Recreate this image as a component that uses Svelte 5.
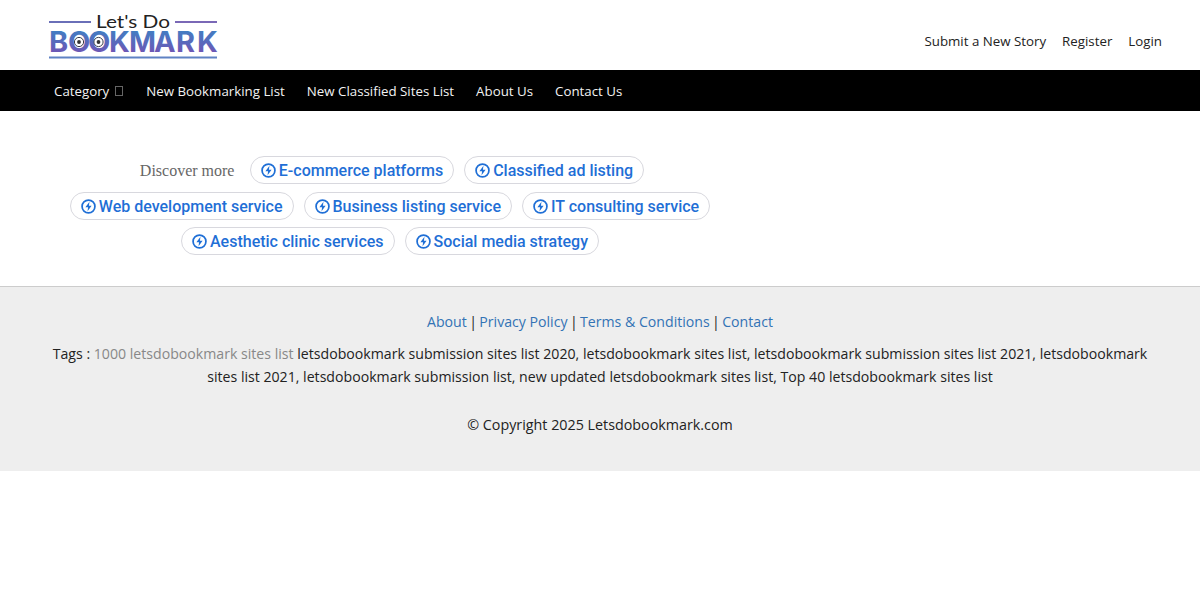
<script>
  const nav = ['New Bookmarking List', 'New Classified Sites List', 'About Us', 'Contact Us'];
  const rows = [
    ['E-commerce platforms', 'Classified ad listing'],
    ['Web development service', 'Business listing service', 'IT consulting service'],
    ['Aesthetic clinic services', 'Social media strategy']
  ];
</script>

<header class="top">
  <svg class="logo" width="170" height="48" viewBox="0 0 170 48" aria-label="Let's Do Bookmark">
    <defs>
      <linearGradient id="g" x1="0" y1="0" x2="0" y2="1">
        <stop offset="0.15" stop-color="#3f80c4" />
        <stop offset="0.85" stop-color="#7055b4" />
      </linearGradient>
    </defs>
    <rect x="0" y="8" width="42" height="2" fill="#6a6fb8" />
    <rect x="126" y="8" width="42" height="2" fill="#7a68b6" />
    <text x="47" y="15" class="lets" textLength="74" lengthAdjust="spacingAndGlyphs">Let's Do</text>
    <text y="39" x="0 19 39 60 80 105 127 148" class="bm" fill="url(#g)">BOOKMARK</text>
    <g fill="#fff" stroke="#3a3a4a" stroke-width="1">
      <circle cx="30" cy="29" r="4.6" />
      <circle cx="49.5" cy="29" r="4.6" />
    </g>
    <circle cx="30" cy="29" r="1.9" fill="#333" />
    <circle cx="49.5" cy="29" r="1.9" fill="#333" />
    <rect x="0" y="43.5" width="168" height="2" fill="#5f82c4" />
  </svg>
  <nav class="toplinks">
    <a href="#s">Submit a New Story</a>
    <a href="#r">Register</a>
    <a href="#l">Login</a>
  </nav>
</header>

<nav class="bar">
  <a class="cat" href="#c">Category <span class="box"></span></a>
  {#each nav as n}<a href="#n">{n}</a>{/each}
</nav>

<main class="main">
  <div class="discover">
    {#each rows as row, i}
      <div class="row">
        {#if i === 0}<span class="label">Discover more</span>{/if}
        {#each row as c}
          <a class="chip" href="#x">
            <svg class="ic" width="15" height="15" viewBox="0 0 14 14" fill="none">
              <circle cx="7" cy="7" r="6" stroke="#1f6fd6" stroke-width="1.6" />
              <path d="M7.9 2.6 4.1 7.8h2.5l-.5 3.6 3.8-5.2H7.4z" fill="#1f6fd6" />
            </svg>
            {c}
          </a>
        {/each}
      </div>
    {/each}
  </div>
</main>

<footer class="foot">
  <p class="links">
    <a href="#a">About</a> | <a href="#p">Privacy Policy</a> | <a href="#t">Terms &amp; Conditions</a> | <a href="#c">Contact</a>
  </p>
  <p class="tags">
    Tags : <a href="#k">1000 letsdobookmark sites list</a> letsdobookmark submission sites list 2020, letsdobookmark sites list, letsdobookmark submission sites list 2021, letsdobookmark sites list 2021, letsdobookmark submission list, new updated letsdobookmark sites list, Top 40 letsdobookmark sites list
  </p>
  <p class="copy">© Copyright 2025 Letsdobookmark.com</p>
</footer>

<style>
  :global(body) {
    margin: 0;
    background: #fff;
    font-family: "Open Sans", "Noto Sans", sans-serif;
    color: #222;
  }
  a { text-decoration: none; }
  .top {
    height: 70px;
    display: flex;
    justify-content: space-between;
    padding: 0 38px 0 49px;
    box-sizing: border-box;
  }
  .logo { margin-top: 13px; overflow: visible; }
  .lets { font: 400 18px Lato, "Liberation Sans", sans-serif; fill: #222; }
  .bm { font: 700 29px Inter, "Liberation Sans", sans-serif; }
  .toplinks {
    display: flex;
    gap: 16px;
    padding-top: 32px;
    font-size: 13.3px;
    line-height: 18px;
  }
  .toplinks a { color: #222; }
  .bar {
    height: 41px;
    background: #000;
    display: flex;
    align-items: center;
    gap: 22px;
    padding-left: 54px;
    font-size: 13.3px;
  }
  .bar a { color: #f2f2f2; white-space: nowrap; }
  .cat { display: flex; align-items: center; gap: 6px; }
  .box {
    display: block;
    width: 6px;
    height: 8px;
    border: 1px solid #666;
    margin: 1px 1px 0 0;
  }
  .main { height: 175px; padding-top: 45px; box-sizing: border-box; }
  .discover {
    width: 780px;
    display: flex;
    flex-direction: column;
    align-items: center;
    gap: 8px;
  }
  .row { display: flex; gap: 10px; align-items: center; height: 28px; }
  .row:nth-child(3) { margin-top: -1px; }
  .label {
    width: 95px;
    font: 16px/30px "Liberation Serif", serif;
    color: #666;
    margin: 1px 5px 0 4px;
    white-space: nowrap;
  }
  .chip {
    display: flex;
    align-items: center;
    gap: 3px;
    height: 28px;
    padding: 0 10px;
    box-sizing: border-box;
    border: 1px solid #d8d8de;
    border-radius: 14px;
    font: 500 16px Roboto, sans-serif;
    color: #1f6fd6;
    white-space: nowrap;
  }
  .ic { margin-top: 1px; }
  .foot {
    height: 185px;
    box-sizing: border-box;
    background: #eee;
    border-top: 1px solid #ccc;
    text-align: center;
    padding: 23px 40px 0;
    font-size: 14.13px;
    line-height: 23px;
  }
  .foot p { margin: 0; }
  .links { word-spacing: -1.3px; }
  .links a { color: #3373b5; word-spacing: 0; }
  .tags { margin-top: 9px !important; }
  .tags a { color: #888; }
  .copy { margin-top: 25px !important; font-size: 14.3px; }
</style>
